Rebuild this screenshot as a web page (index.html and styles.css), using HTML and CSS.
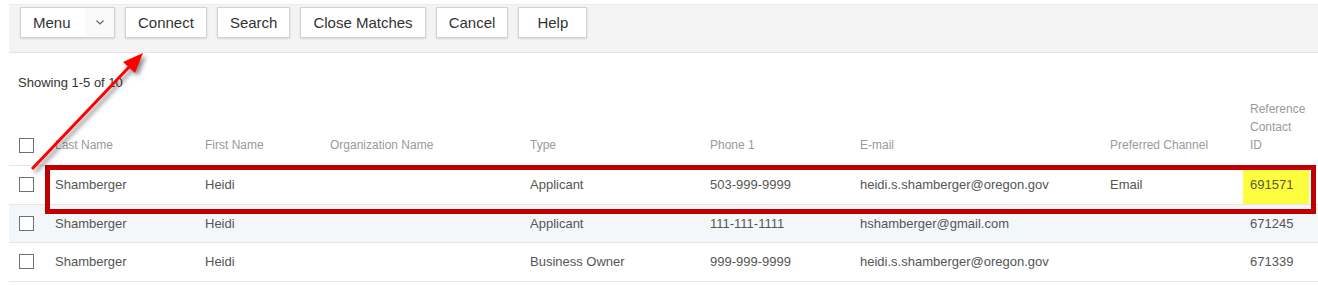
FILE: index.html
```html
<!DOCTYPE html>
<html>
<head>
<meta charset="utf-8">
<link rel="stylesheet" href="styles.css">
</head>
<body>
<div class="page">
  <div class="toolbar">
    <button class="btn btn-menu"><span class="label">Menu</span><span class="caret"><svg width="8" height="5" viewBox="0 0 8 5"><polyline points="0.5,0.5 4,4 7.5,0.5" fill="none" stroke="#666" stroke-width="1.2"/></svg></span></button>
    <button class="btn">Connect</button>
    <button class="btn">Search</button>
    <button class="btn">Close Matches</button>
    <button class="btn">Cancel</button>
    <button class="btn btn-help">Help</button>
  </div>

  <div class="summary">Showing 1-5 of 10</div>

  <div class="grid">
    <div class="row head">
      <div class="cell check"><span class="box"></span></div>
      <div class="cell">Last Name</div>
      <div class="cell">First Name</div>
      <div class="cell">Organization Name</div>
      <div class="cell">Type</div>
      <div class="cell">Phone 1</div>
      <div class="cell">E-mail</div>
      <div class="cell">Preferred Channel</div>
      <div class="cell ref">Reference Contact ID</div>
    </div>
    <div class="row">
      <div class="cell check"><span class="box"></span></div>
      <div class="cell">Shamberger</div>
      <div class="cell">Heidi</div>
      <div class="cell"></div>
      <div class="cell">Applicant</div>
      <div class="cell">503-999-9999</div>
      <div class="cell">heidi.s.shamberger@oregon.gov</div>
      <div class="cell">Email</div>
      <div class="cell highlight">691571</div>
    </div>
    <div class="row alt">
      <div class="cell check"><span class="box"></span></div>
      <div class="cell">Shamberger</div>
      <div class="cell">Heidi</div>
      <div class="cell"></div>
      <div class="cell">Applicant</div>
      <div class="cell">111-111-1111</div>
      <div class="cell">hshamberger@gmail.com</div>
      <div class="cell"></div>
      <div class="cell">671245</div>
    </div>
    <div class="row">
      <div class="cell check"><span class="box"></span></div>
      <div class="cell">Shamberger</div>
      <div class="cell">Heidi</div>
      <div class="cell"></div>
      <div class="cell">Business Owner</div>
      <div class="cell">999-999-9999</div>
      <div class="cell">heidi.s.shamberger@oregon.gov</div>
      <div class="cell"></div>
      <div class="cell">671339</div>
    </div>
  </div>

  <div class="callout"></div>

  <svg class="arrow" width="200" height="200" viewBox="0 0 200 200">
    <g class="arrow-g">
      <line x1="32" y1="165" x2="131" y2="61" stroke="#ff0000" stroke-width="3"/>
      <polygon points="143,49 135,69 123,58" fill="#ff0000"/>
    </g>
  </svg>
</div>
</body>
</html>
```

FILE: styles.css
```css
* { box-sizing: border-box; }

html, body {
  margin: 0;
  padding: 0;
  background: #ffffff;
}

body {
  font-family: "Liberation Sans", Arial, sans-serif;
  width: 1318px;
  height: 285px;
  overflow: hidden;
}

.page {
  position: relative;
  width: 1318px;
  height: 285px;
}

.toolbar {
  margin-top: 4px;
  margin-left: 9px;
  height: 49px;
  background: #f4f4f4;
  border-top: 1px solid #ececec;
  border-bottom: 1px solid #e4e4e4;
  padding: 2px 0 0 11px;
  display: flex;
  align-items: flex-start;
  gap: 10px;
}

.btn {
  height: 31px;
  padding: 0 12px;
  background: #ffffff;
  border: 1px solid #d2d2d2;
  box-shadow: 0 1px 2px rgba(0, 0, 0, 0.12);
  font-family: "Liberation Sans", Arial, sans-serif;
  font-size: 15px;
  color: #333333;
  display: flex;
  align-items: center;
  justify-content: center;
  cursor: default;
}

.btn-menu {
  padding: 0 0 0 12px;
  width: 95px;
  justify-content: flex-start;
}

.btn-menu .label {
  flex: 1;
  text-align: left;
}

.btn-menu .caret {
  width: 29px;
  height: 29px;
  display: flex;
  align-items: center;
  justify-content: center;
  background: #fafafa;
  padding-left: 1px;
}

.btn-help {
  width: 69px;
}

.summary {
  margin: 21px 0 0 18px;
  font-size: 13px;
  line-height: 18px;
  color: #333333;
}

.grid {
  margin-left: 9px;
  width: 1309px;
  font-size: 13px;
  color: #555555;
}

.row {
  display: grid;
  grid-template-columns: 46px 150px 125px 200px 180px 150px 250px 140px 68px;
  height: 38.6px;
  border-bottom: 1px solid #e6e6e6;
  align-items: center;
}

.row.alt {
  background: #f4f7fa;
}

.row.head {
  height: 74px;
  align-items: end;
  padding-bottom: 11px;
  font-size: 12px;
  line-height: 18px;
  color: #9a9a9a;
}

.cell {
  white-space: nowrap;
}

.row.head .cell.ref {
  white-space: normal;
  width: 56px;
}

.cell.check {
  padding-left: 10px;
  display: flex;
  align-items: center;
}

.row.head .cell.check {
  padding-bottom: 1px;
}

.box {
  display: block;
  width: 15px;
  height: 15px;
  border: 1px solid #707070;
  background: #ffffff;
}

.cell.highlight {
  align-self: stretch;
  display: flex;
  align-items: center;
  margin-left: -7px;
  margin-right: 9px;
  padding-left: 7px;
  background: #fdfd3e;
  color: #5a5a3a;
}

.callout {
  position: absolute;
  left: 45px;
  top: 161px;
  width: 1271px;
  height: 49px;
  border: 5px solid #c00000;
  pointer-events: none;
}

.arrow {
  position: absolute;
  left: 0;
  top: 0;
  overflow: visible;
  pointer-events: none;
}

.arrow-g {
  filter: drop-shadow(3px 3px 2px rgba(0, 0, 0, 0.45));
}
```
